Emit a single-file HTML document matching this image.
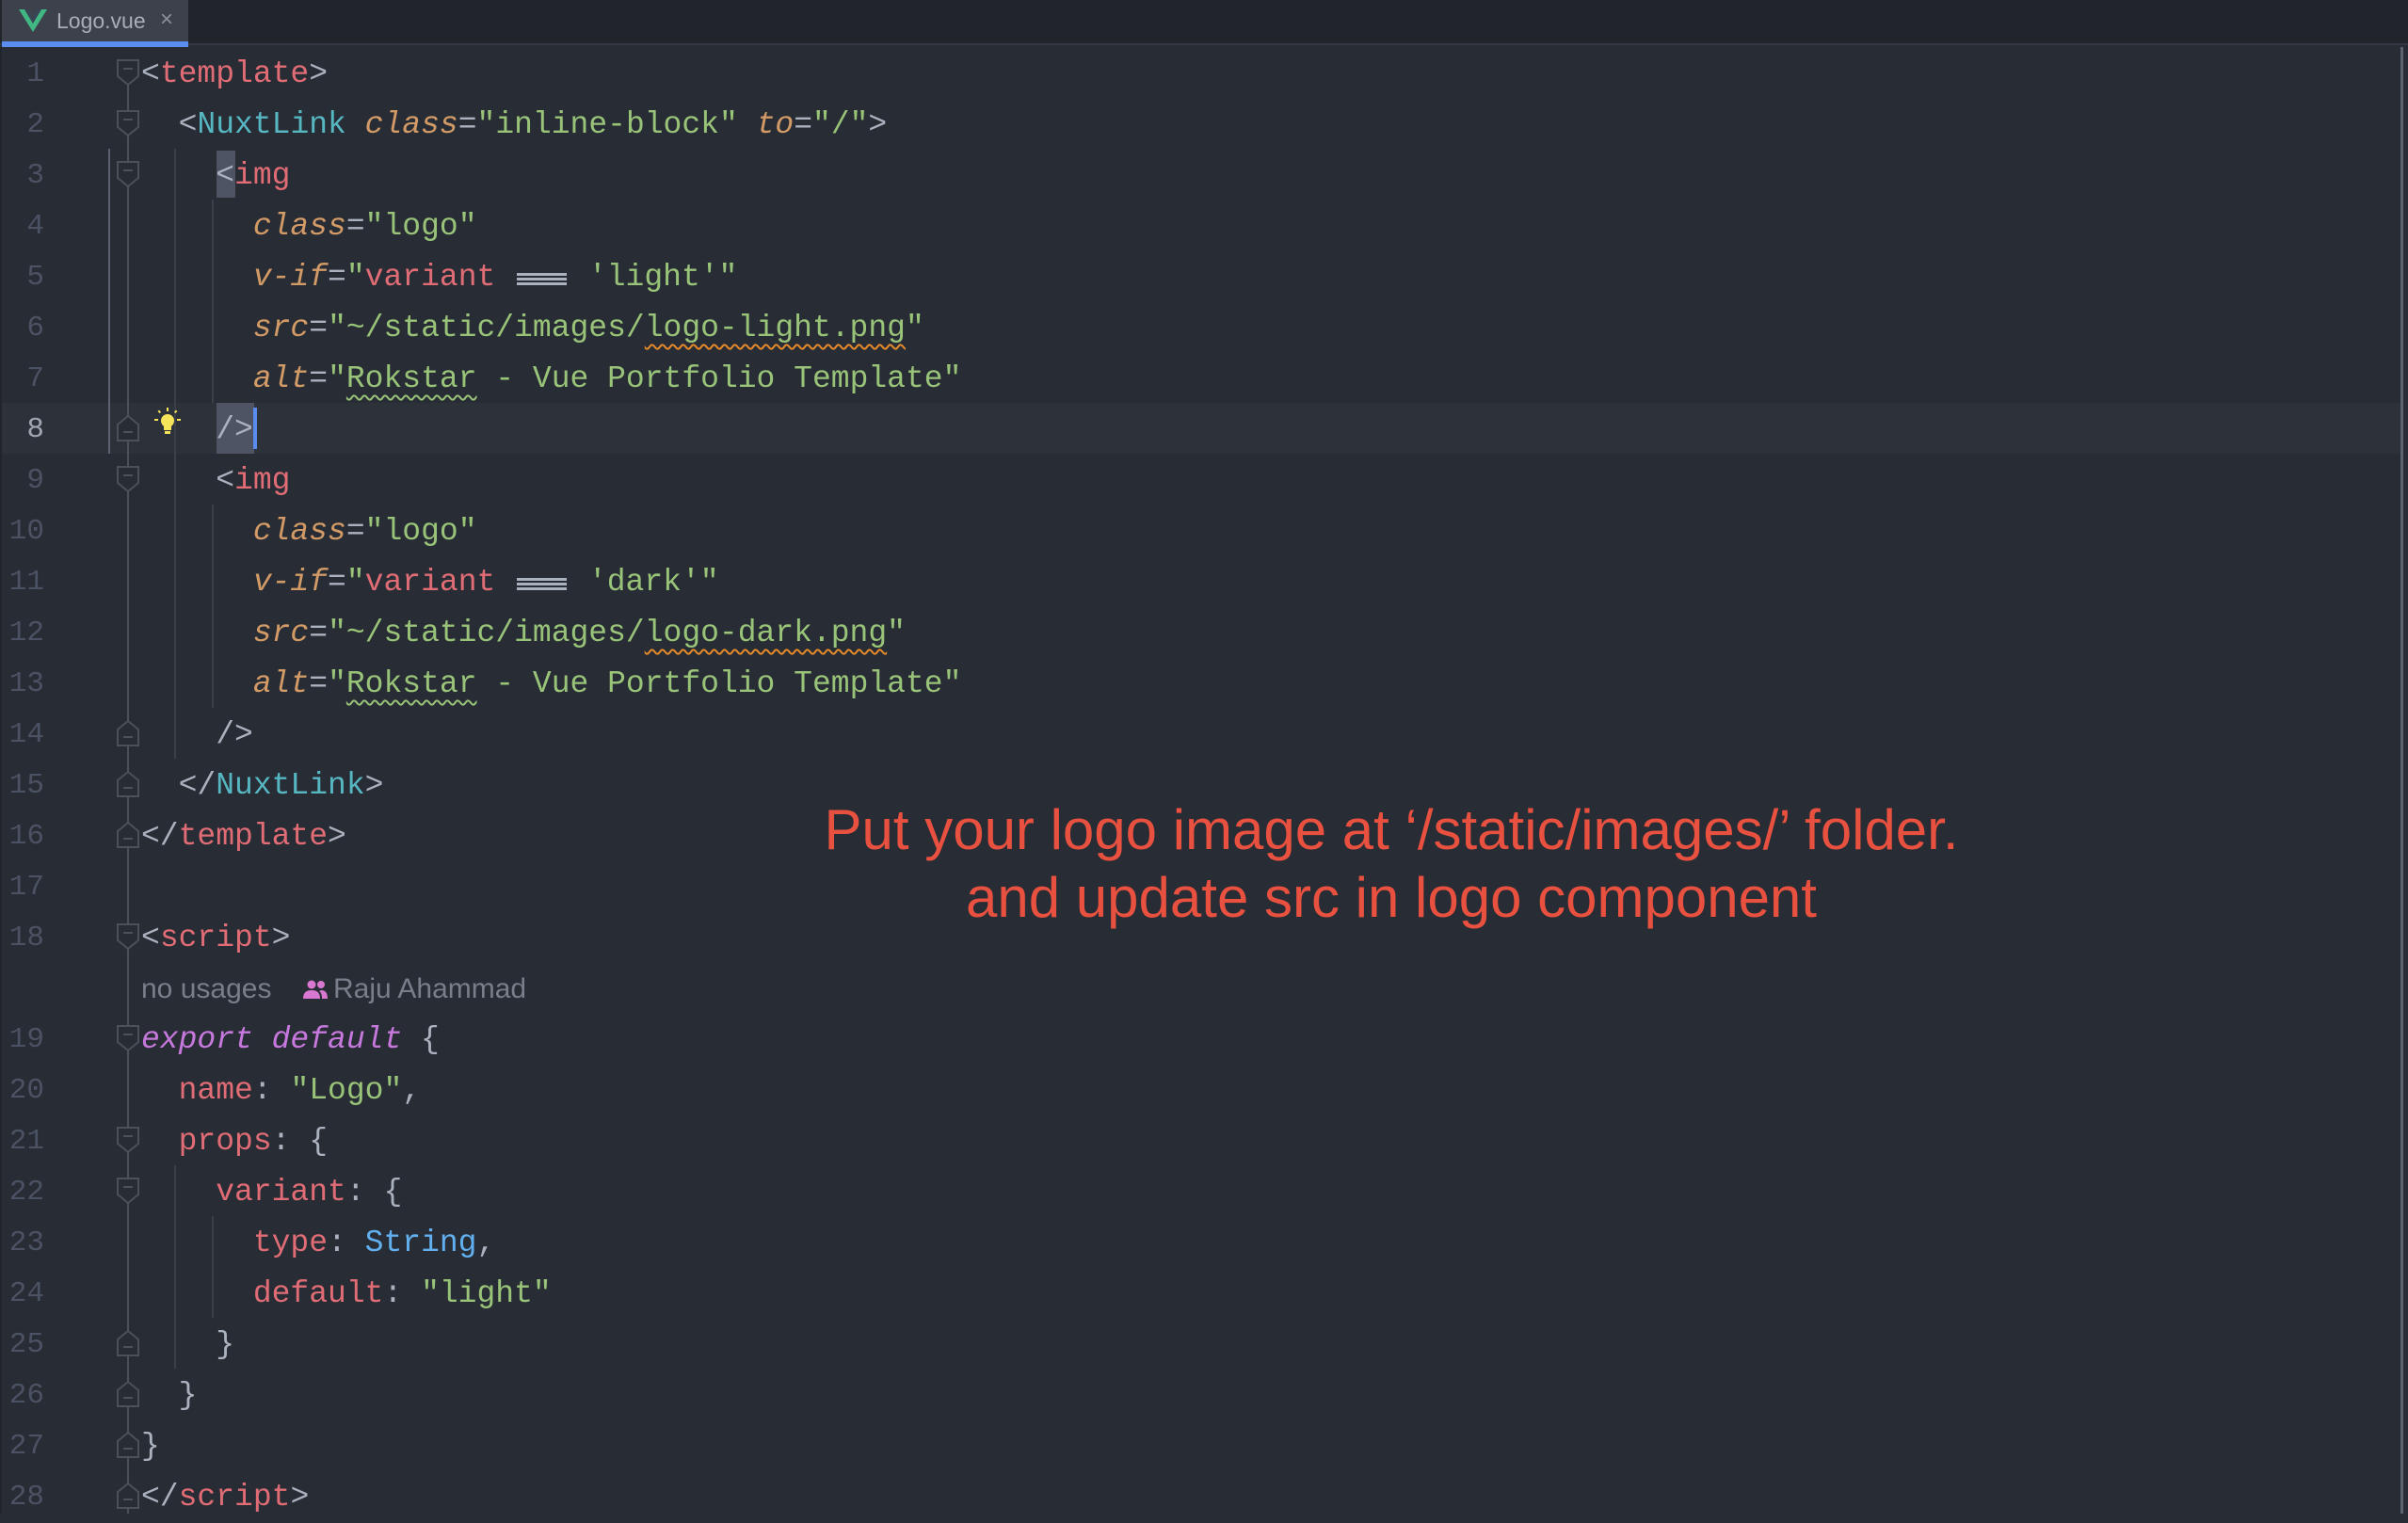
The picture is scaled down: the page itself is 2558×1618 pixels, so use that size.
<!DOCTYPE html>
<html><head><meta charset="utf-8"><style>
*{margin:0;padding:0;box-sizing:border-box}
body{width:2558px;height:1608px;background:#282c34;position:relative;overflow:hidden;font-family:"Liberation Mono",monospace}
.tabbar{position:absolute;left:0;top:0;width:2558px;height:48px;background:#21252b;border-bottom:2px solid #333842}
.tab{position:absolute;left:2px;top:0;width:198px;height:50px;background:#3d414b;border-bottom:6px solid #5b8cf0}
.tab .nm{position:absolute;left:58px;top:9px;font:23px "Liberation Sans",sans-serif;color:#a8adb8}
.tab .x{position:absolute;left:168px;top:7px;font:24px "Liberation Sans",sans-serif;color:#8a909b}
.ln{position:absolute;left:0;width:47px;text-align:right;font-size:31px;line-height:54px;height:54px;color:#4b5263;margin-top:2px}
.cl{position:absolute;left:150px;font-size:33px;line-height:54px;height:54px;white-space:pre;color:#abb2bf;margin-top:2px}
.t{color:#e06c75}.a{color:#d19a66;font-style:italic}.s{color:#98c379}.n{color:#56b6c2}.k{color:#c678dd;font-style:italic}.b{color:#61afef}
.w{text-decoration:underline wavy #e5892a;text-underline-offset:8px;text-decoration-thickness:2px}
.wg{text-decoration:underline wavy #98c379;text-underline-offset:8px;text-decoration-thickness:2px}
.eq{display:inline-block;width:59px;height:54px;vertical-align:top;position:relative}
.eq i{position:absolute;left:3px;right:3px;height:3px;background:#abb2bf}
.g{position:absolute;width:2px;background:#3b4048}
.f{position:absolute;left:124px}
.note{position:absolute;left:815px;width:1326px;text-align:center;font:60px "Liberation Sans",sans-serif;color:#e8503f;line-height:72px}
.inl{position:absolute;top:1034px;height:54px;line-height:54px;font:30px 'Liberation Sans',sans-serif;color:#787e8a;white-space:pre}
</style></head><body>
<div class="tabbar"></div>
<div class="tab">
<svg style="position:absolute;left:18px;top:10px" width="30" height="24" viewBox="0 0 30 24"><path d="M0 0H6L15 15L24 0H30L15 24Z" fill="#41b883"/><path d="M6 0H11L15 7L19 0H24L15 15Z" fill="#35495e" opacity=".5"/></svg>
<span class="nm">Logo.vue</span><span class="x">×</span></div>

<div style="position:absolute;left:0;top:428px;width:2550px;height:54px;background:#2c313a"></div>
<div style="position:absolute;left:2550px;top:50px;width:3px;height:1558px;background:#5c6370"></div>
<div style="position:absolute;left:0;top:50px;width:2px;height:1558px;background:#21252b"></div>

<div class="g" style="left:135px;top:64px;height:1544px;background:#4b5059"></div>
<div class="g" style="left:115px;top:158px;height:324px;background:#5c6370"></div>
<div class="g" style="left:185px;top:158px;height:648px"></div>
<div class="g" style="left:225px;top:212px;height:216px"></div>
<div class="g" style="left:225px;top:536px;height:216px"></div>
<div class="g" style="left:185px;top:1238px;height:216px"></div>
<div class="g" style="left:225px;top:1292px;height:108px"></div>

<svg width="0" height="0" style="position:absolute"><defs>
<g id="fd"><path d="M1 1H23V18L12 27L1 18Z" fill="#282c34" stroke="#4b5059" stroke-width="2"/><path d="M7 10H17" stroke="#4b5059" stroke-width="2"/></g>
<g id="fu"><path d="M12 1L23 10V27H1V10Z" fill="#282c34" stroke="#4b5059" stroke-width="2"/><path d="M7 18H17" stroke="#4b5059" stroke-width="2"/></g>
</defs></svg>
<svg class="f" style="top:63px" width="24" height="28"><use href="#fd"/></svg>
<svg class="f" style="top:117px" width="24" height="28"><use href="#fd"/></svg>
<svg class="f" style="top:171px" width="24" height="28"><use href="#fd"/></svg>
<svg class="f" style="top:441px" width="24" height="28"><use href="#fu"/></svg>
<svg class="f" style="top:495px" width="24" height="28"><use href="#fd"/></svg>
<svg class="f" style="top:765px" width="24" height="28"><use href="#fu"/></svg>
<svg class="f" style="top:819px" width="24" height="28"><use href="#fu"/></svg>
<svg class="f" style="top:873px" width="24" height="28"><use href="#fu"/></svg>
<svg class="f" style="top:981px" width="24" height="28"><use href="#fd"/></svg>
<svg class="f" style="top:1089px" width="24" height="28"><use href="#fd"/></svg>
<svg class="f" style="top:1197px" width="24" height="28"><use href="#fd"/></svg>
<svg class="f" style="top:1251px" width="24" height="28"><use href="#fd"/></svg>
<svg class="f" style="top:1413px" width="24" height="28"><use href="#fu"/></svg>
<svg class="f" style="top:1467px" width="24" height="28"><use href="#fu"/></svg>
<svg class="f" style="top:1521px" width="24" height="28"><use href="#fu"/></svg>
<svg class="f" style="top:1575px" width="24" height="28"><use href="#fu"/></svg>

<svg style="position:absolute;left:162px;top:432px" width="32" height="32" viewBox="0 0 32 32"><g fill="#f5e35a"><circle cx="16" cy="15" r="7"/><rect x="12" y="20" width="8" height="5"/><rect x="13" y="26" width="6" height="3"/><rect x="15" y="1" width="2" height="4"/><rect x="2" y="13" width="4" height="2"/><rect x="26" y="13" width="4" height="2"/><rect x="6" y="4" width="2" height="3" transform="rotate(-40 7 5)"/><rect x="24" y="4" width="2" height="3" transform="rotate(40 25 5)"/></g></svg>

<div style="position:absolute;left:230px;top:160px;width:20px;height:50px;background:#4e5464"></div>
<div style="position:absolute;left:230px;top:428px;width:40px;height:54px;background:#4e5464"></div>
<div style="position:absolute;left:269px;top:433px;width:4px;height:44px;background:#5a8cf0"></div>

<div class="ln" style="top:50px">1</div><div class="ln" style="top:104px">2</div><div class="ln" style="top:158px">3</div><div class="ln" style="top:212px">4</div><div class="ln" style="top:266px">5</div><div class="ln" style="top:320px">6</div><div class="ln" style="top:374px">7</div><div class="ln" style="top:428px;color:#a0a6b1">8</div><div class="ln" style="top:482px">9</div><div class="ln" style="top:536px">10</div><div class="ln" style="top:590px">11</div><div class="ln" style="top:644px">12</div><div class="ln" style="top:698px">13</div><div class="ln" style="top:752px">14</div><div class="ln" style="top:806px">15</div><div class="ln" style="top:860px">16</div><div class="ln" style="top:914px">17</div><div class="ln" style="top:968px">18</div><div class="ln" style="top:1076px">19</div><div class="ln" style="top:1130px">20</div><div class="ln" style="top:1184px">21</div><div class="ln" style="top:1238px">22</div><div class="ln" style="top:1292px">23</div><div class="ln" style="top:1346px">24</div><div class="ln" style="top:1400px">25</div><div class="ln" style="top:1454px">26</div><div class="ln" style="top:1508px">27</div><div class="ln" style="top:1562px">28</div>

<div class="cl" style="top:50px">&lt;<span class="t">template</span>&gt;</div>
<div class="cl" style="top:104px">  &lt;<span class="n">NuxtLink</span> <span class="a">class</span>=<span class="s">"inline-block"</span> <span class="a">to</span>=<span class="s">"/"</span>&gt;</div>
<div class="cl" style="top:158px">    &lt;<span class="t">img</span></div>
<div class="cl" style="top:212px">      <span class="a">class</span>=<span class="s">"logo"</span></div>
<div class="cl" style="top:266px">      <span class="a">v-if</span>=<span class="s">"</span><span class="t">variant</span> <span class="eq"><i style="top:22px"></i><i style="top:27px"></i><i style="top:32px"></i></span> <span class="s">'light'"</span></div>
<div class="cl" style="top:320px">      <span class="a">src</span>=<span class="s">"~/static/images/<span class="w">logo-light.png</span>"</span></div>
<div class="cl" style="top:374px">      <span class="a">alt</span>=<span class="s">"<span class="wg">Rokstar</span> - Vue Portfolio Template"</span></div>
<div class="cl" style="top:428px">    /&gt;</div>
<div class="cl" style="top:482px">    &lt;<span class="t">img</span></div>
<div class="cl" style="top:536px">      <span class="a">class</span>=<span class="s">"logo"</span></div>
<div class="cl" style="top:590px">      <span class="a">v-if</span>=<span class="s">"</span><span class="t">variant</span> <span class="eq"><i style="top:22px"></i><i style="top:27px"></i><i style="top:32px"></i></span> <span class="s">'dark'"</span></div>
<div class="cl" style="top:644px">      <span class="a">src</span>=<span class="s">"~/static/images/<span class="w">logo-dark.png</span>"</span></div>
<div class="cl" style="top:698px">      <span class="a">alt</span>=<span class="s">"<span class="wg">Rokstar</span> - Vue Portfolio Template"</span></div>
<div class="cl" style="top:752px">    /&gt;</div>
<div class="cl" style="top:806px">  &lt;/<span class="n">NuxtLink</span>&gt;</div>
<div class="cl" style="top:860px">&lt;/<span class="t">template</span>&gt;</div>
<div class="cl" style="top:968px">&lt;<span class="t">script</span>&gt;</div>
<div class="inl" style="left:150px">no usages</div>
<svg style="position:absolute;left:322px;top:1040px" width="26" height="22" viewBox="0 0 26 22"><g fill="#d978d0"><circle cx="9" cy="6" r="4.5"/><circle cx="19" cy="6" r="4"/><path d="M0 21C0 14 4 12 9 12S18 14 18 21Z"/><path d="M19 12C23 12 26 14 26 21H20C20 17 19 14 17 13Z"/></g></svg>
<div class="inl" style="left:354px">Raju Ahammad</div>
<div class="cl" style="top:1076px"><span class="k">export default</span> {</div>
<div class="cl" style="top:1130px">  <span class="t">name</span>: <span class="s">"Logo"</span>,</div>
<div class="cl" style="top:1184px">  <span class="t">props</span>: {</div>
<div class="cl" style="top:1238px">    <span class="t">variant</span>: {</div>
<div class="cl" style="top:1292px">      <span class="t">type</span>: <span class="b">String</span>,</div>
<div class="cl" style="top:1346px">      <span class="t">default</span>: <span class="s">"light"</span></div>
<div class="cl" style="top:1400px">    }</div>
<div class="cl" style="top:1454px">  }</div>
<div class="cl" style="top:1508px">}</div>
<div class="cl" style="top:1562px">&lt;/<span class="t">script</span>&gt;</div>

<div class="note" style="top:846px">Put your logo image at ‘/static/images/’ folder.</div>
<div class="note" style="top:918px">and update src in logo component</div>
</body></html>
